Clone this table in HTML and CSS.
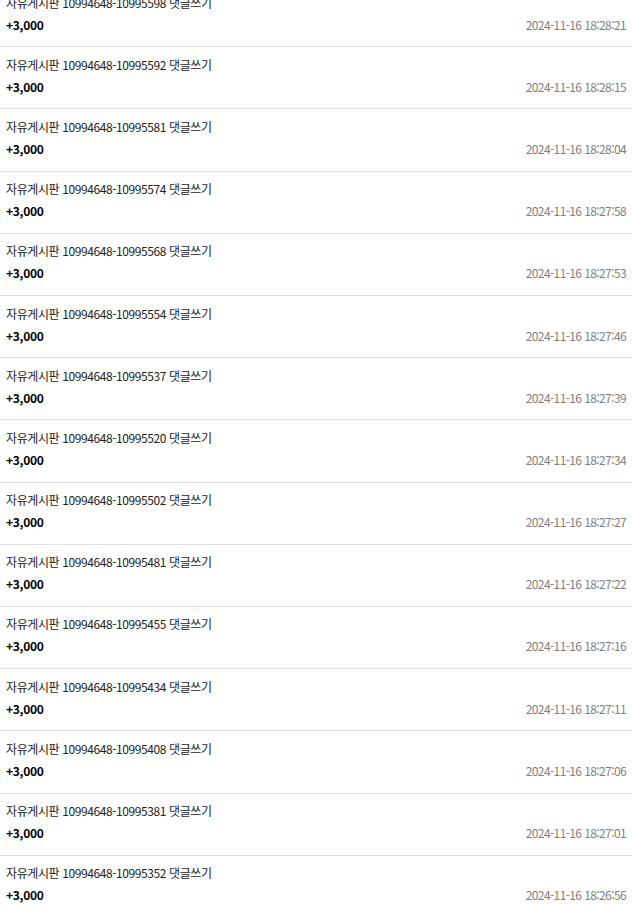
FILE: index.html
```html
<!DOCTYPE html>
<html lang="ko">
<head>
  <meta charset="UTF-8">
  <meta name="viewport" content="width=device-width, initial-scale=1.0">
  <title>포인트 내역</title>
  <link rel="stylesheet" href="styles.css">
</head>
<body>
  <ul class="point-list">
    <li class="point-item">
      <div class="point-title">자유게시판 10994648-10995598 댓글쓰기</div>
      <div class="point-meta"><span class="point-amount">+3,000</span><span class="point-date">2024-11-16 18:28:21</span></div>
    </li>
    <li class="point-item">
      <div class="point-title">자유게시판 10994648-10995592 댓글쓰기</div>
      <div class="point-meta"><span class="point-amount">+3,000</span><span class="point-date">2024-11-16 18:28:15</span></div>
    </li>
    <li class="point-item">
      <div class="point-title">자유게시판 10994648-10995581 댓글쓰기</div>
      <div class="point-meta"><span class="point-amount">+3,000</span><span class="point-date">2024-11-16 18:28:04</span></div>
    </li>
    <li class="point-item">
      <div class="point-title">자유게시판 10994648-10995574 댓글쓰기</div>
      <div class="point-meta"><span class="point-amount">+3,000</span><span class="point-date">2024-11-16 18:27:58</span></div>
    </li>
    <li class="point-item">
      <div class="point-title">자유게시판 10994648-10995568 댓글쓰기</div>
      <div class="point-meta"><span class="point-amount">+3,000</span><span class="point-date">2024-11-16 18:27:53</span></div>
    </li>
    <li class="point-item">
      <div class="point-title">자유게시판 10994648-10995554 댓글쓰기</div>
      <div class="point-meta"><span class="point-amount">+3,000</span><span class="point-date">2024-11-16 18:27:46</span></div>
    </li>
    <li class="point-item">
      <div class="point-title">자유게시판 10994648-10995537 댓글쓰기</div>
      <div class="point-meta"><span class="point-amount">+3,000</span><span class="point-date">2024-11-16 18:27:39</span></div>
    </li>
    <li class="point-item">
      <div class="point-title">자유게시판 10994648-10995520 댓글쓰기</div>
      <div class="point-meta"><span class="point-amount">+3,000</span><span class="point-date">2024-11-16 18:27:34</span></div>
    </li>
    <li class="point-item">
      <div class="point-title">자유게시판 10994648-10995502 댓글쓰기</div>
      <div class="point-meta"><span class="point-amount">+3,000</span><span class="point-date">2024-11-16 18:27:27</span></div>
    </li>
    <li class="point-item">
      <div class="point-title">자유게시판 10994648-10995481 댓글쓰기</div>
      <div class="point-meta"><span class="point-amount">+3,000</span><span class="point-date">2024-11-16 18:27:22</span></div>
    </li>
    <li class="point-item">
      <div class="point-title">자유게시판 10994648-10995455 댓글쓰기</div>
      <div class="point-meta"><span class="point-amount">+3,000</span><span class="point-date">2024-11-16 18:27:16</span></div>
    </li>
    <li class="point-item">
      <div class="point-title">자유게시판 10994648-10995434 댓글쓰기</div>
      <div class="point-meta"><span class="point-amount">+3,000</span><span class="point-date">2024-11-16 18:27:11</span></div>
    </li>
    <li class="point-item">
      <div class="point-title">자유게시판 10994648-10995408 댓글쓰기</div>
      <div class="point-meta"><span class="point-amount">+3,000</span><span class="point-date">2024-11-16 18:27:06</span></div>
    </li>
    <li class="point-item">
      <div class="point-title">자유게시판 10994648-10995381 댓글쓰기</div>
      <div class="point-meta"><span class="point-amount">+3,000</span><span class="point-date">2024-11-16 18:27:01</span></div>
    </li>
    <li class="point-item">
      <div class="point-title">자유게시판 10994648-10995352 댓글쓰기</div>
      <div class="point-meta"><span class="point-amount">+3,000</span><span class="point-date">2024-11-16 18:26:56</span></div>
    </li>
  </ul>
</body>
</html>
```

FILE: styles.css
```css
body {
  margin: 0;
  background: #ffffff;
  color: #111;
  font-family: "Noto Sans CJK KR", "Noto Sans", sans-serif;
  font-size: 12px;
}
.point-list {
  list-style: none;
  margin: -14.9px 0 0;
  padding: 0;
}
.point-item {
  padding: 8.5px 6px 12.7px;
  border-bottom: 1px solid #e1e1e1;
}
.point-title {
  line-height: 18px;
  color: #222;
  letter-spacing: -0.4px;
}
.point-meta {
  display: flex;
  justify-content: space-between;
  align-items: center;
  margin-top: 4px;
  line-height: 18px;
}
.point-amount {
  font-weight: 700;
  color: #000;
  letter-spacing: -0.3px;
}
.point-date {
  color: #808080;
  letter-spacing: -0.6px;
}
```
